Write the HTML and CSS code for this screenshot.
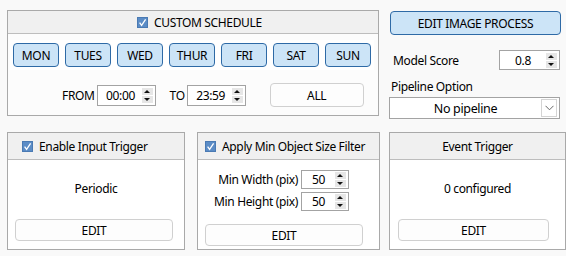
FILE: index.html
```html
<!DOCTYPE html>
<html>
<head>
<meta charset="utf-8">
<link rel="stylesheet" href="styles.css">
</head>
<body>
<div class="page">
  <div class="top-row">
    <section class="panel schedule">
      <div class="panel-head head-schedule">
        <span class="check"><svg width="11" height="11" viewBox="0 0 11 11"><rect x="0.5" y="0.5" width="10" height="10" fill="#5b8cc6" stroke="#4a7ab3"/><path d="M2.6 5.6 L4.6 8.4 L8.6 2.4" fill="none" stroke="#fff" stroke-width="1.3"/></svg></span>
        <span>CUSTOM SCHEDULE</span>
      </div>
      <div class="schedule-body">
        <div class="days">
          <button class="btn-blue day">MON</button>
          <button class="btn-blue day">TUES</button>
          <button class="btn-blue day">WED</button>
          <button class="btn-blue day">THUR</button>
          <button class="btn-blue day">FRI</button>
          <button class="btn-blue day">SAT</button>
          <button class="btn-blue day">SUN</button>
        </div>
        <div class="time-row">
          <span class="lbl">FROM</span>
          <div class="spin spin-time"><span class="spin-val">00:00</span><span class="spin-btns"><i class="up"></i><i class="down"></i></span></div>
          <span class="lbl lbl-to">TO</span>
          <div class="spin spin-time"><span class="spin-val">23:59</span><span class="spin-btns"><i class="up"></i><i class="down"></i></span></div>
          <button class="btn-plain btn-all">ALL</button>
        </div>
      </div>
    </section>
    <aside class="side">
      <button class="btn-blue btn-process">EDIT IMAGE PROCESS</button>
      <div class="score-row">
        <span class="lbl">Model Score</span>
        <div class="spin spin-score"><span class="spin-val">0.8</span><span class="spin-btns"><i class="up"></i><i class="down"></i></span></div>
      </div>
      <div class="pipe-label">Pipeline Option</div>
      <div class="select"><span class="select-val">No pipeline</span><span class="chev"><svg width="9" height="6" viewBox="0 0 9 6"><path d="M0.5 0.8 L4.5 4.8 L8.5 0.8" fill="none" stroke="#666" stroke-width="1"/></svg></span></div>
    </aside>
  </div>
  <div class="bottom-row">
    <section class="panel panel-input">
      <div class="panel-head head-input">
        <span class="check"><svg width="11" height="11" viewBox="0 0 11 11"><rect x="0.5" y="0.5" width="10" height="10" fill="#5b8cc6" stroke="#4a7ab3"/><path d="M2.6 5.6 L4.6 8.4 L8.6 2.4" fill="none" stroke="#fff" stroke-width="1.3"/></svg></span>
        <span>Enable Input Trigger</span>
      </div>
      <div class="panel-body">
        <div class="info">Periodic</div>
        <button class="btn-plain btn-edit">EDIT</button>
      </div>
    </section>
    <section class="panel panel-size">
      <div class="panel-head head-size">
        <span class="check"><svg width="11" height="11" viewBox="0 0 11 11"><rect x="0.5" y="0.5" width="10" height="10" fill="#5b8cc6" stroke="#4a7ab3"/><path d="M2.6 5.6 L4.6 8.4 L8.6 2.4" fill="none" stroke="#fff" stroke-width="1.3"/></svg></span>
        <span>Apply Min Object Size Filter</span>
      </div>
      <div class="size-body">
        <div class="size-grid">
          <span class="lbl">Min Width (pix)</span>
          <div class="spin spin-size"><span class="spin-val">50</span><span class="spin-btns"><i class="up"></i><i class="down"></i></span></div>
          <span class="lbl">Min Height (pix)</span>
          <div class="spin spin-size"><span class="spin-val">50</span><span class="spin-btns"><i class="up"></i><i class="down"></i></span></div>
        </div>
        <button class="btn-plain btn-edit">EDIT</button>
      </div>
    </section>
    <section class="panel panel-event">
      <div class="panel-head head-event">
        <span>Event Trigger</span>
      </div>
      <div class="panel-body">
        <div class="info">0 configured</div>
        <button class="btn-plain btn-edit btn-edit-narrow">EDIT</button>
      </div>
    </section>
  </div>
</div>
</body>
</html>
```

FILE: styles.css
```css
* { box-sizing: border-box; }
html, body { margin: 0; padding: 0; }
body {
  background: #f9f9f9;
  font-family: "Noto Sans", "Open Sans", sans-serif;
  font-size: 12px;
  letter-spacing: -0.35px;
  color: #000;
  width: 566px;
  height: 256px;
  overflow: hidden;
}
button {
  font-family: inherit;
  font-size: 12px;
  letter-spacing: -0.35px;
  color: #000;
  padding: 0;
  margin: 0;
  cursor: default;
}
.page {
  padding: 10px 0 0 7px;
  display: flex;
  flex-direction: column;
  gap: 16px;
}
.top-row { display: flex; gap: 11px; height: 106px; align-items: flex-start; }
.panel {
  border: 1px solid #a9a9a9;
  background: #fcfcfc;
  display: flex;
  flex-direction: column;
}
.panel-head {
  background: #f0f0f0;
  border-bottom: 1px solid #bdbdbd;
  display: flex;
  align-items: center;
  white-space: nowrap;
}
.check { display: inline-flex; margin-right: 6px; }
.check svg { display: block; }

.schedule { width: 372px; height: 106px; }
.head-schedule { height: 23px; padding-left: 129px; }
.schedule-body { padding: 6px 0 0 2px; display: flex; flex-direction: column; }
.days {
  width: 364px;
  background: #ffffff;
  padding: 3px;
  display: flex;
  gap: 6px;
}
.btn-blue {
  background: #cce4f7;
  border: 1px solid #2e6aa6;
  border-radius: 4px;
}
.day { width: 46px; height: 24px; }
.time-row {
  display: flex;
  align-items: center;
  height: 24px;
  margin-top: 13px;
  padding-left: 52px;
}
.lbl { white-space: nowrap; }
.time-row .spin { margin-left: 2px; }
.lbl-to { margin-left: 14px; }
.btn-plain {
  background: #fdfdfd;
  border: 1px solid #d0d0d0;
  border-radius: 4px;
}
.btn-all { width: 94px; height: 24px; margin-left: 24px; }

.spin {
  display: flex;
  align-items: center;
  border: 1px solid #a3a3a3;
  background: #fff;
  padding-right: 2px;
}
.spin-val { flex: 1; text-align: center; }
.spin-btns {
  width: 11px;
  display: flex;
  flex-direction: column;
  gap: 1px;
}
.spin-btns i {
  height: 7px;
  background: #e6e6e6;
  position: relative;
  display: block;
}
.spin-btns i::after {
  content: "";
  position: absolute;
  left: 2px;
  width: 0;
  height: 0;
  border-left: 3.5px solid transparent;
  border-right: 3.5px solid transparent;
}
.spin-btns .up::after { top: 2px; border-bottom: 3px solid #111; }
.spin-btns .down::after { top: 2px; border-top: 3px solid #111; }
.spin-time { width: 59px; height: 21px; }
.spin-time .spin-val { padding-left: 2px; }

.side { width: 171px; padding-top: 1px; display: flex; flex-direction: column; }
.btn-process { width: 171px; height: 24px; }
.score-row {
  display: flex;
  align-items: center;
  justify-content: space-between;
  margin-top: 15px;
  padding-left: 3px;
  width: 170px;
}
.spin-score { width: 61px; height: 20px; }
.pipe-label { margin-top: 9px; margin-left: 1px; line-height: 16px; }
.select {
  margin-top: 2px;
  margin-left: -1px;
  width: 171px;
  height: 22px;
  border: 1px solid #a3a3a3;
  background: #fff;
  display: flex;
  align-items: center;
  padding-right: 2px;
}
.select-val { flex: 1; text-align: center; font-size: 12.5px; }
.chev {
  width: 16px;
  height: 18px;
  border: 1px solid #d4d4d4;
  display: flex;
  align-items: center;
  justify-content: center;
}

.bottom-row { display: flex; }
.panel-input { width: 178px; height: 118px; }
.panel-size { width: 183px; height: 118px; margin-left: 12px; }
.panel-event { width: 177px; height: 118px; margin-left: 9px; }
.bottom-row .panel { background: #ffffff; }
.bottom-row .panel-head { height: 27px; }
.head-input { padding-left: 14px; }
.head-size { padding-left: 7px; }
.head-event { justify-content: center; }
.panel-body {
  display: flex;
  flex-direction: column;
  align-items: center;
  padding-top: 20px;
}
.info { line-height: 17px; }
.btn-edit { width: 158px; height: 22px; margin-top: 22px; }
.panel-body .btn-edit { align-self: flex-start; margin-left: 7px; }
.btn-edit-narrow { width: 151px; margin-left: 8px !important; }
.size-body { display: flex; flex-direction: column; padding: 10px 0 0 7px; }
.size-grid {
  display: grid;
  grid-template-columns: 93px 48px;
  column-gap: 3px;
  row-gap: 3px;
  align-items: center;
}
.size-grid .lbl { text-align: right; }
.spin-size { width: 48px; height: 19px; }
.size-body .btn-edit { margin-top: 13px; }
```
